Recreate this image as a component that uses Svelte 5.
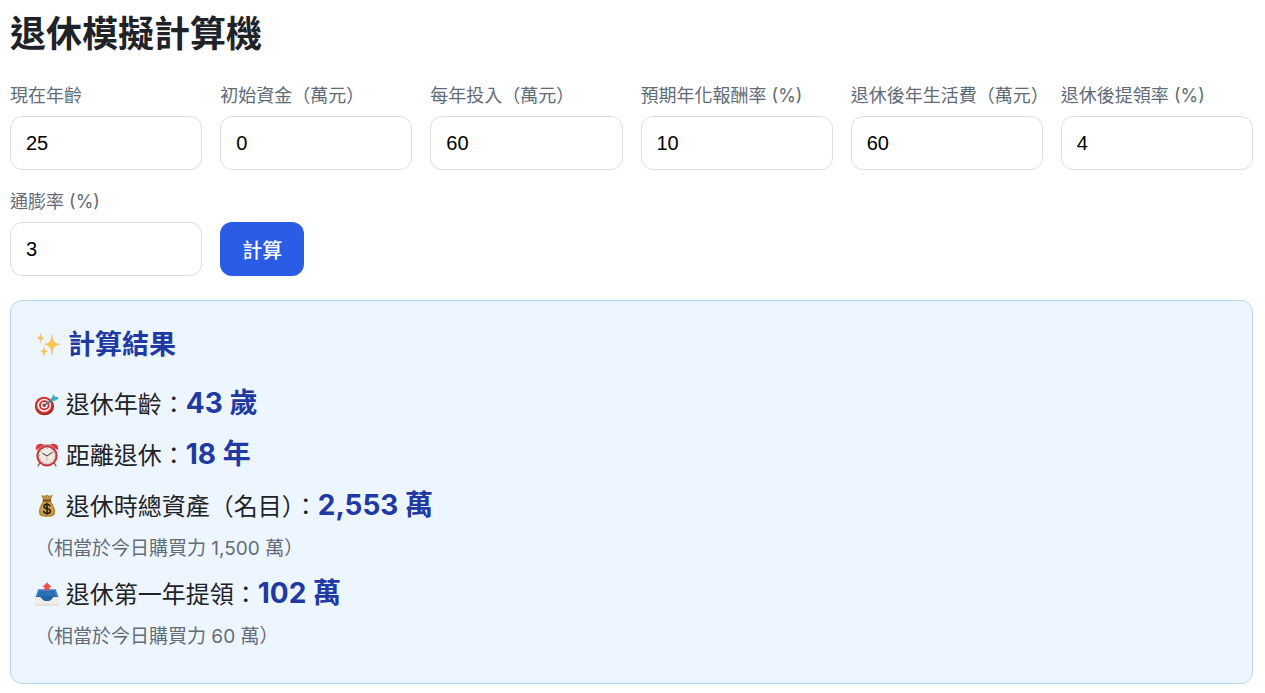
<script lang="ts">
  interface Field {
    id: string;
    label: string;
    value: number;
  }

  interface Result {
    age: number;
    years: number;
    total: number;
    totalToday: number;
    withdraw: number;
    withdrawToday: number;
  }

  let fields: Field[] = $state([
    { id: "age", label: "現在年齡", value: 25 },
    { id: "initial", label: "初始資金（萬元）", value: 0 },
    { id: "yearly", label: "每年投入（萬元）", value: 60 },
    { id: "rate", label: "預期年化報酬率 (%)", value: 10 },
    { id: "expense", label: "退休後年生活費（萬元）", value: 60 },
    { id: "withdrawal", label: "退休後提領率 (%)", value: 4 },
    { id: "inflation", label: "通膨率 (%)", value: 3 },
  ]);

  const calculate = (): Result | null => {
    const [age, initial, yearly, rate, expense, withdrawal, inflation] = fields.map((f) => f.value);
    const totalToday = expense / (withdrawal / 100);
    let asset = initial;
    let total = totalToday;

    for (let years = 0; years <= 100; years++) {
      if (asset >= total) {
        return {
          age: age + years,
          years,
          total,
          totalToday,
          withdraw: (total * withdrawal) / 100,
          withdrawToday: expense,
        };
      }
      asset = asset * (1 + rate / 100) + yearly;
      total *= 1 + inflation / 100;
    }
    return null;
  };

  let result: Result | null = $state(calculate());

  const format = (n: number) => Math.floor(n).toLocaleString("en-US");

  const onSubmit = (e: SubmitEvent) => {
    e.preventDefault();
    result = calculate();
  };
</script>

<main>
  <h1>退休模擬計算機</h1>

  <form onsubmit={onSubmit}>
    {#each fields as field (field.id)}
      <div class="field">
        <label for={field.id}>{field.label}</label>
        <input id={field.id} type="number" step="any" bind:value={field.value} />
      </div>
    {/each}
    <button type="submit">計算</button>
  </form>

  <section class="result">
    <h2>
      <svg class="sparkles" viewBox="-2 0 27 27" aria-hidden="true">
        <g fill="#fcc93c" stroke="#f3b98c" stroke-width="0.6">
          <path d="M15 2.5C15.7 9 17 11.2 23.2 12.3C17 13.4 15.7 15.6 15 23C14.3 15.6 13 13.4 7.4 12.3C13 11.2 14.3 9 15 2.5Z" />
          <path d="M3.6 1.5C4 4.5 4.6 5.4 7 6C4.6 6.6 4 7.5 3.6 10.8C3.2 7.5 2.6 6.6 0.3 6C2.6 5.4 3.2 4.5 3.6 1.5Z" />
          <path d="M7.2 15C7.6 18 8.2 18.8 10.6 19.4C8.2 20 7.6 21 7.2 24C6.8 21 6.2 20 3.8 19.4C6.2 18.8 6.8 18 7.2 15Z" />
        </g>
      </svg>
      計算結果
    </h2>

    {#if result}
      <p class="row">
        <svg class="icon" viewBox="0 0 24 24" aria-hidden="true">
          <ellipse cx="9.5" cy="14.3" rx="9.5" ry="9" fill="#8f1f20" />
          <ellipse cx="9" cy="13.5" rx="9" ry="8.8" fill="#d22f2f" />
          <ellipse cx="9.2" cy="13.3" rx="6.9" ry="6.6" fill="#f6eeee" />
          <ellipse cx="9.3" cy="13.3" rx="5.2" ry="5" fill="#cf2c2c" />
          <ellipse cx="9.3" cy="13.3" rx="3.4" ry="3.2" fill="#f6eeee" />
          <circle cx="9.3" cy="13.3" r="1.7" fill="#c72222" />
          <path d="M9.4 13.2L18.5 7" stroke="#287f91" stroke-width="1.5" />
          <path d="M15.4 7.5L17.8 3.7L18.8 1.8L20 5L24 5.8L21.3 8.3L16.8 9.4Z" fill="#48b9c5" />
          <path d="M16.2 8.6L20.2 5.2L23 6" fill="none" stroke="#258798" stroke-width="0.8" />
        </svg>
        退休年齡：<strong>{result.age} 歲</strong>
      </p>
      <p class="row">
        <svg class="icon" viewBox="0 0 24 24" aria-hidden="true">
          <path d="M5 19.5L2.8 23.3M19 19.5L21.2 23.3" stroke="#777" stroke-width="1.5" />
          <path d="M1.2 7.2C-0.4 3 2.8-0.5 9.4 1.4ZM22.8 7.2C24.4 3 21.2-0.5 14.6 1.4Z" fill="#d83b3e" />
          <path d="M8.4 3.5L9.4 1.2H14.6L15.6 3.5" fill="#a9a3a4" />
          <circle cx="12" cy="12.8" r="10.6" fill="#ce3337" />
          <circle cx="12" cy="12.8" r="8.7" fill="#eee9e3" stroke="#a94745" stroke-width="0.5" />
          <circle cx="12" cy="12.8" r="7.4" fill="none" stroke="#77716c" stroke-width="1" stroke-dasharray="0.7 3.17" />
          <path d="M7.3 10.1L12 13L17.6 9.2" fill="none" stroke="#333" stroke-width="1" />
          <path d="M12 13V18" stroke="#df7868" stroke-width="0.5" />
        </svg>
        距離退休：<strong>{result.years} 年</strong>
      </p>
      <p class="row">
        <svg class="icon" viewBox="0 0 24 24" aria-hidden="true">
          <path d="M8.6 6.5L6.2 1.3L9.5 1.8L12 0.8L14 1.8L17.8 1L15.5 6.5Z" fill="#ad812e" />
          <path d="M8.4 6.3C6.8 9.5 3.9 13.7 3.9 18C3.9 22.2 7.4 22.9 12 22.9C16.7 22.9 20.2 22.1 20.2 18C20.2 13.6 17.2 9.5 15.6 6.3Z" fill="#b58a34" />
          <path d="M8.7 8.4C6.9 12 5 15.4 5.5 18.3C6.7 21.6 16.8 22 18.3 18.4C18.8 15 16.9 11.2 15.1 8.4Z" fill="#cba249" />
          <path d="M7.7 6.5H16.2" stroke="#775019" stroke-width="1.8" />
          <path d="M9 2.6L10.4 5M12.2 2V5M15.5 2.4L13.7 5" stroke="#dfbf6c" stroke-width="0.8" />
          <path d="M15.1 12.4C14.7 10.9 13.6 10.3 12 10.3C10.2 10.3 9 11.1 9 12.6C9 15.8 15.4 13.8 15.4 17C15.4 18.4 14 19.4 12 19.4C10.1 19.4 8.9 18.5 8.6 16.9M12.1 8.8V20.8" fill="none" stroke="#292417" stroke-width="1.6" />
        </svg>
        退休時總資產（名目）：<strong>{format(result.total)} 萬</strong>
      </p>
      <p class="note">（相當於今日購買力 {format(result.totalToday)} 萬）</p>
      <p class="row">
        <svg class="icon" viewBox="0 0 24 24" aria-hidden="true">
          <path d="M3.2 7.2H20.8L23.4 15L21 20H3L0.6 15Z" fill="#3a83cb" />
          <path d="M4.4 8.8H19.6L21.6 15H2.4Z" fill="#2b6fb8" />
          <path d="M0.6 14.2H23.4L18 19.5H6Z" fill="#2462a8" />
          <path d="M0.2 15H4.6C5.4 15 5.8 15.4 6.4 16.2C7.8 18.2 9.4 19 12 19C14.6 19 16.2 18.2 17.6 16.2C18.2 15.4 18.6 15 19.4 15H23.8V22C23.8 22.9 23.4 23.4 22.4 23.4H1.6C0.6 23.4 0.2 22.9 0.2 22Z" fill="#efede9" />
          <path d="M0.5 22.9H23.5" stroke="#d8d3cc" stroke-width="1" />
          <path d="M12 0.4L16.6 5H14.6V8.2H9.4V5H7.4Z" fill="#f94d4b" />
        </svg>
        退休第一年提領：<strong>{format(result.withdraw)} 萬</strong>
      </p>
      <p class="note">（相當於今日購買力 {format(result.withdrawToday)} 萬）</p>
    {:else}
      <p class="row">無法達成退休目標</p>
    {/if}
  </section>
</main>

<style>
  :global(body) {
    margin: 0;
    background: #fff;
  }

  main {
    padding: 8px 12px 8px 10px;
    font-family: Inter, "Noto Sans CJK TC", sans-serif;
    color: #1f2328;
  }

  h1 {
    margin: 0 0 22px;
    font-size: 36px;
    line-height: 52px;
    font-weight: 700;
  }

  form {
    display: grid;
    grid-template-columns: repeat(auto-fit, minmax(180px, 1fr));
    gap: 18px;
    align-items: end;
  }

  .field {
    display: flex;
    flex-direction: column;
    gap: 6px;
  }

  label {
    font-size: 18px;
    line-height: 28px;
    color: #5f6b76;
    white-space: nowrap;
  }

  input {
    box-sizing: border-box;
    width: 100%;
    height: 54px;
    padding: 0 15px;
    border: 1px solid #dcdfe6;
    border-radius: 12px;
    background: #fff;
    font-family: "Liberation Sans", sans-serif;
    font-size: 20px;
    color: #000;
  }

  button {
    justify-self: start;
    height: 54px;
    padding: 0 22px;
    border: none;
    border-radius: 12px;
    background: #2b5ce6;
    color: #fff;
    font-family: inherit;
    font-size: 20px;
    font-weight: 500;
    cursor: pointer;
  }

  button:hover {
    background: #1f4fd8;
  }

  .result {
    margin-top: 24px;
    padding: 24px 24px 26px;
    border: 1px solid #b5d5fb;
    border-radius: 12px;
    background: #edf5ff;
  }

  h2 {
    display: flex;
    align-items: center;
    gap: 6px;
    margin: 0 0 14px;
    font-size: 27px;
    line-height: 40px;
    font-weight: 700;
    color: #213aa3;
  }

  .sparkles {
    width: 27px;
    height: 27px;
  }

  .icon {
    width: 24px;
    height: 24px;
    vertical-align: -3px;
  }

  .row {
    margin: 0;
    font-size: 24px;
    line-height: 51px;
  }

  .row strong {
    font-size: 28px;
    line-height: 32px;
    font-weight: 700;
    color: #213aa3;
  }

  .note {
    margin: 0 0 4px;
    font-size: 19px;
    line-height: 33px;
    color: #656c79;
  }
</style>
